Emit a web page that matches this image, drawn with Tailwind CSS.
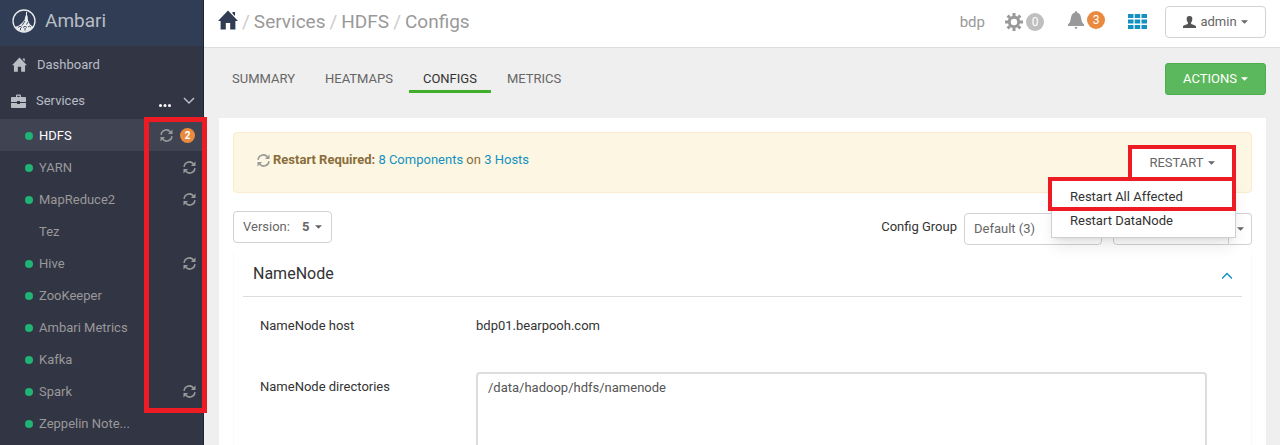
<!DOCTYPE html>
<html lang="en">
  <head>
    <meta charset="UTF-8">
    <meta name="viewport" content="width=device-width, initial-scale=1.0">
    <title>Ambari - HDFS Configs</title>
    <script src="https://cdn.jsdelivr.net/npm/@tailwindcss/browser@4"></script>
  </head>
  <body class="bg-[#efefef] font-[Roboto,sans-serif] text-[13px] leading-5 text-[#333]">
    <!-- icons -->
    <svg class="hidden" xmlns="http://www.w3.org/2000/svg">
      <symbol id="refresh" viewBox="0 0 14 14">
        <path d="M1.200 6.300A5.600 5.600 0 0 1 11.200 3.200M12.800 7.700A5.600 5.600 0 0 1 2.800 10.800" fill="none" stroke="currentColor" stroke-width="1.700"/>
        <path d="M13.500 .5v5H8.500zM.5 13.500v-5h5z" fill="currentColor"/>
      </symbol>
      <symbol id="home" viewBox="0 0 20 20">
        <path d="M10 .5 20 11h-2.600v8.500h-5.200V13H7.800v6.500H2.600V11H0zM14.500 2h2.500v4l-2.500-2.500z" fill="currentColor"/>
      </symbol>
      <symbol id="caret" viewBox="0 0 8 4">
        <path d="M0 0h8L4 4z" fill="currentColor"/>
      </symbol>
    </svg>

    <div class="flex h-screen overflow-hidden">
      <aside class="w-[204px] shrink-0 border-r border-[#1d2433] bg-[#323544] text-[#b8bec4]">
        <a href="#" class="flex h-[46px] items-center gap-[9px] bg-[#313d54] pb-1 pl-3 text-[19px]">
          <svg class="h-6 w-6" viewBox="0 0 24 24" fill="none" stroke="#e8ebee">
            <circle cx="12" cy="12" r="11" stroke-width="1.300"/>
            <path d="M14.500 3v4" stroke-width="1"/>
            <path d="M13.500 6.500h2l.5 5 2 4 3.500 2.500-3.500 3-6 2-6-2-3-3 4-1.500 3-2.500 2.500-3z" fill="#e8ebee" stroke="none"/>
            <path d="M13 12l-3 4.500M16 13l-1.500 2.500M6 18.500q2-2.500 4 0M11 18.500q2-2.500 4 0M16 18q1.500-1.500 3 0M8.500 19v2M13 19v2.500" stroke="#313d54" stroke-width=".9"/>
          </svg>
          <span>Ambari</span>
        </a>
        <nav>
          <a href="#" class="flex h-[37px] items-center gap-[10px] pl-3">
            <svg class="h-[15px] w-[15px]"><use href="#home"/></svg>
            Dashboard
          </a>
          <div class="flex h-9 items-center pr-2 pl-[11px]">
            <svg class="mr-[10px] h-[15px] w-[15px]" viewBox="0 0 15 15" fill="currentColor">
              <path d="M5 3V1.500Q5 .5 6 .5h3q1 0 1 1V3h4q1 0 1 1v4H9V7H6v1H0V4q0-1 1-1zM6.300 3h2.400V1.800H6.300zM0 9h6v1h3V9h6v4q0 1-1 1H1q-1 0-1-1z"/>
            </svg>
            <span class="grow">Services</span>
            <button type="button" aria-label="Service actions" class="mt-2 mr-3 text-white">
              <svg class="h-[3px] w-3" viewBox="0 0 12 3" fill="currentColor"><circle cx="1.500" cy="1.500" r="1.500"/><circle cx="6" cy="1.500" r="1.500"/><circle cx="10.500" cy="1.500" r="1.500"/></svg>
            </button>
            <svg class="h-2 w-3" viewBox="0 0 12 8" fill="none" stroke="currentColor" stroke-width="1.500"><path d="M1 1l5 5 5-5"/></svg>
          </div>
          <div class="relative text-[#999]">
            <ul>
              <li><a href="#" class="flex h-8 items-center bg-[#404351] pt-px pr-2 pl-[25px] text-white"><i class="mr-1.5 h-2 w-2 rounded-full bg-[#1eb475]"></i><span class="grow">HDFS</span><svg class="mr-[7px] h-[13px] w-[13px] text-[#999]"><use href="#refresh"/></svg><b class="h-[15px] w-[15px] rounded-full bg-[#e98a40] text-center text-[10px] leading-[15px]">2</b></a></li>
              <li><a href="#" class="flex h-8 items-center pt-px pr-[7px] pl-[25px]"><i class="mr-1.5 h-2 w-2 rounded-full bg-[#1eb475]"></i><span class="grow">YARN</span><svg class="h-[13px] w-[13px]"><use href="#refresh"/></svg></a></li>
              <li><a href="#" class="flex h-8 items-center pt-px pr-[7px] pl-[25px]"><i class="mr-1.5 h-2 w-2 rounded-full bg-[#1eb475]"></i><span class="grow">MapReduce2</span><svg class="h-[13px] w-[13px]"><use href="#refresh"/></svg></a></li>
              <li><a href="#" class="flex h-8 items-center pt-px pl-[39px]">Tez</a></li>
              <li><a href="#" class="flex h-8 items-center pt-px pr-[7px] pl-[25px]"><i class="mr-1.5 h-2 w-2 rounded-full bg-[#1eb475]"></i><span class="grow">Hive</span><svg class="h-[13px] w-[13px]"><use href="#refresh"/></svg></a></li>
              <li><a href="#" class="flex h-8 items-center pt-px pl-[25px]"><i class="mr-1.5 h-2 w-2 rounded-full bg-[#1eb475]"></i>ZooKeeper</a></li>
              <li><a href="#" class="flex h-8 items-center pt-px pl-[25px]"><i class="mr-1.5 h-2 w-2 rounded-full bg-[#1eb475]"></i>Ambari Metrics</a></li>
              <li><a href="#" class="flex h-8 items-center pt-px pl-[25px]"><i class="mr-1.5 h-2 w-2 rounded-full bg-[#1eb475]"></i>Kafka</a></li>
              <li><a href="#" class="flex h-8 items-center pt-px pr-[7px] pl-[25px]"><i class="mr-1.5 h-2 w-2 rounded-full bg-[#1eb475]"></i><span class="grow">Spark</span><svg class="h-[13px] w-[13px]"><use href="#refresh"/></svg></a></li>
              <li><a href="#" class="flex h-8 items-center pt-px pl-[25px]"><i class="mr-1.5 h-2 w-2 rounded-full bg-[#1eb475]"></i>Zeppelin Note...</a></li>
            </ul>
            <!-- callout around the restart indicators -->
            <div class="pointer-events-none absolute -top-0.5 -right-1 h-[296px] w-[63px] border-5 border-[#ed1c24]"></div>
          </div>
        </nav>
      </aside>

      <div class="min-w-0 grow">
        <header class="flex h-12 items-center border-b border-[#ddd] bg-white px-[14px] pb-1">
          <nav class="flex grow items-center gap-1 text-[19px] text-[#999]">
            <a href="#" aria-label="Home" class="mb-1 text-[#313d54]"><svg class="h-5 w-5"><use href="#home"/></svg></a>
            <span class="text-[#ccc]">/</span>
            <a href="#">Services</a>
            <span class="text-[#ccc]">/</span>
            <a href="#">HDFS</a>
            <span class="text-[#ccc]">/</span>
            <span>Configs</span>
          </nav>
          <a href="#" class="mr-5 text-[15px] text-[#999]">bdp</a>
          <a href="#" class="mr-6 flex items-center gap-[3px]">
            <svg class="h-[18px] w-[18px]" viewBox="0 0 18 18" fill="none" stroke="#999">
              <circle cx="9" cy="9" r="4.700" stroke-width="3"/>
              <path d="M9 0v3M9 15v3M0 9h3M15 9h3M2.600 2.600l2.200 2.200M13.200 13.200l2.200 2.200M15.400 2.600l-2.200 2.200M4.800 13.200l-2.200 2.200" stroke-width="3"/>
            </svg>
            <span class="h-[18px] w-[18px] rounded-full bg-[#bfbfbf] text-center text-xs leading-[18px] text-white">0</span>
          </a>
          <a href="#" class="mr-[23px] flex items-center gap-[3px] pb-1">
            <svg class="h-[18px] w-4" viewBox="0 0 16 18" fill="#999"><path d="M8 0q1.200 0 1.200 1.500Q12.500 2.500 13 6.500q.3 4.500 3 7v1.500H0v-1.500q2.700-2.500 3-7 .5-4 3.800-5Q6.800 0 8 0zM6.500 16h3q-.5 2-1.500 2t-1.500-2z"/></svg>
            <span class="h-[18px] w-[18px] rounded-full bg-[#e98a40] text-center text-xs leading-[18px] text-white">3</span>
          </a>
          <button type="button" aria-label="Views" class="mr-[18px]">
            <svg class="h-[15px] w-[19px]" viewBox="0 0 19 15" fill="#1491c1"><path d="M0 0h5.500v4H0zM6.700 0h5.500v4H6.700zM13.500 0H19v4h-5.500zM0 5.500h5.500v4H0zM6.700 5.500h5.500v4H6.700zM13.500 5.500H19v4h-5.500zM0 11h5.500v4H0zM6.700 11h5.500v4H6.700zM13.500 11H19v4h-5.500z"/></svg>
          </button>
          <button type="button" class="flex h-8 w-[101px] items-center justify-center gap-1 rounded border border-[#cfd3d7] text-[#666]">
            <svg class="h-3 w-[13px] text-[#555]" viewBox="0 0 13 12" fill="currentColor"><path d="M6.500 0C9 0 9.500 1.500 9.300 3.500 9.200 5.500 8 6 8 7.500c0 1 5 1.500 5 3V12H0v-1.500c0-1.500 5-2 5-3C5 6 3.800 5.500 3.700 3.500 3.500 1.500 4 0 6.500 0z"/></svg>
            admin
            <svg class="h-1 w-[7px]"><use href="#caret"/></svg>
          </button>
        </header>

        <div class="flex items-start justify-between px-[14px] pt-[15px]">
          <nav class="flex gap-0.5 text-[#666]">
            <a href="#" class="px-[14px] pt-1.5 pb-1">SUMMARY</a>
            <a href="#" class="px-[14px] pt-1.5 pb-1">HEATMAPS</a>
            <a href="#" class="border-b-3 border-[#3fae2a] px-[14px] pt-1.5 pb-px text-[#333]">CONFIGS</a>
            <a href="#" class="px-[14px] pt-1.5 pb-1">METRICS</a>
          </nav>
          <button type="button" class="flex h-8 w-[101px] items-center justify-center gap-1 rounded-[3px] border border-[#4cae4c] bg-[#5cb85c] text-white">ACTIONS <svg class="h-1 w-[7px]"><use href="#caret"/></svg></button>
        </div>

        <main class="mr-[14px] ml-[15px] mt-[23px] bg-white p-[14px] pb-0">
          <div class="flex h-[61px] items-start justify-between rounded border border-[#faebcc] bg-[#fcf6e2] pr-[15px] pl-[23px]">
            <p class="flex items-center gap-[3px] pt-[17px] text-[#8a6d3b]">
              <svg class="h-[13px] w-[13px] text-[#999]"><use href="#refresh"/></svg>
              <span><b>Restart Required:</b> <a href="#" class="text-[#1491c1]">8 Components</a> on <a href="#" class="text-[#1491c1]">3 Hosts</a></span>
            </p>
            <div class="relative mt-3">
              <button type="button" class="flex h-9 w-[108px] items-center justify-center gap-1 border-4 border-[#ed1c24] bg-white text-[#666]">RESTART <svg class="h-1 w-[7px]"><use href="#caret"/></svg></button>
              <ul class="absolute top-8 right-0 z-10 w-[185px] border border-[#ccd0d4] bg-white pb-1.5 shadow-lg">
                <li class="-mt-px -mr-px -ml-1 border-4 border-[#ed1c24]"><a href="#" class="block pt-1.5 pl-[18px]">Restart All Affected</a></li>
                <li><a href="#" class="block pl-[18px]">Restart DataNode</a></li>
              </ul>
            </div>
          </div>

          <div class="mt-[18px] flex items-start justify-between">
            <button type="button" class="flex h-8 items-center rounded border border-[#cfd3d7] px-[9px] text-[#666]">Version: <b class="mr-1.5 ml-3">5</b> <svg class="h-1 w-[7px]"><use href="#caret"/></svg></button>
            <div class="flex items-center pt-0.5">
              <label for="group" class="mr-[7px] pb-1">Config Group</label>
              <select id="group" class="mr-[11px] h-8 w-[138px] appearance-none rounded border border-[#cfd3d7] px-[9px] text-[#666]"><option>Default (3)</option></select>
              <input type="text" aria-label="Filter" class="h-8 w-[116px] rounded-l border border-[#cfd3d7] px-2">
              <button type="button" aria-label="Filter options" class="flex h-8 w-[23px] items-center justify-center rounded-r border border-l-0 border-[#cfd3d7] text-[#666]"><svg class="h-1 w-[7px]"><use href="#caret"/></svg></button>
            </div>
          </div>

          <section class="mt-[6px] border-x border-[#fafafa] px-[9px]">
            <div class="flex h-[46px] items-center justify-between border-b border-[#ddd] px-[10px]">
              <h2 class="text-base">NameNode</h2>
              <button type="button" aria-label="Collapse"><svg class="mt-1 h-2 w-[10px]" viewBox="0 0 10 8" fill="none" stroke="#1491c1" stroke-width="1.500"><path d="M0 6.500l5-5 5 5"/></svg></button>
            </div>
            <div class="grid grid-cols-[216px_1fr] gap-y-9 pt-[19px] pr-[35px] pl-[17px]">
              <span>NameNode host</span>
              <span>bdp01.bearpooh.com</span>
              <label for="dirs" class="pt-[5px]">NameNode directories</label>
              <textarea id="dirs" class="block h-24 w-full resize-none rounded border-2 border-[#ddd] px-[10px] py-1 text-[#555]">/data/hadoop/hdfs/namenode</textarea>
            </div>
          </section>
        </main>
      </div>
    </div>
  </body>
</html>
